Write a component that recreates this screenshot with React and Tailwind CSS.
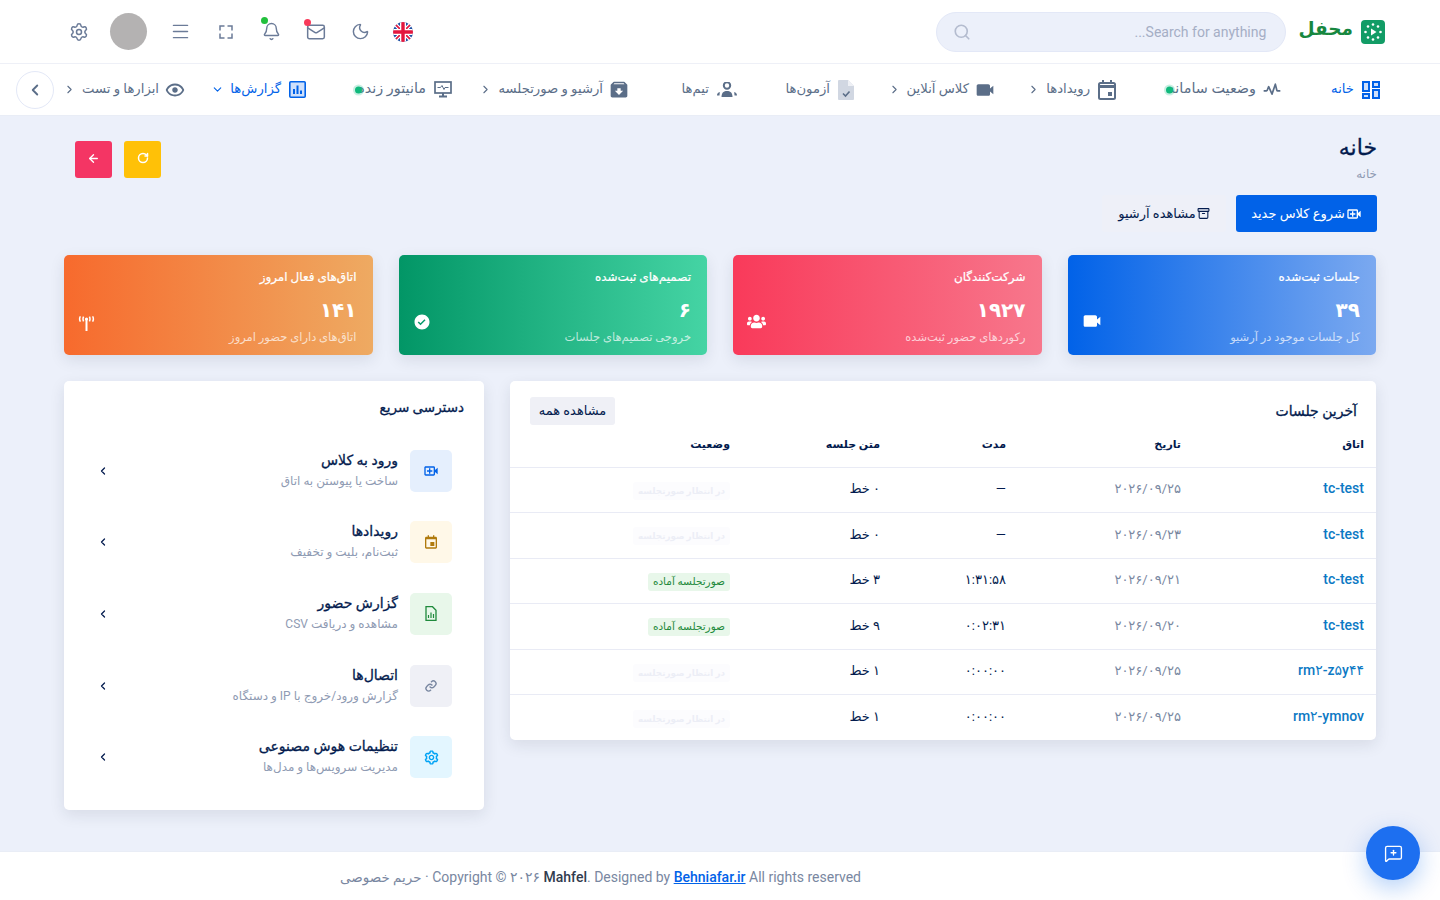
import { Settings, Menu, Bell, Mail, Moon, Search, ChevronLeft, ChevronRight, ChevronDown, ArrowLeft, RotateCw, MessageSquarePlus, Archive } from "lucide-react";
import { FaUsers } from "react-icons/fa";
import { BiSolidVideo, BiVideoPlus, BiCalendarEvent, BiLink, BiCog, BiPulse, BiSolidArchiveIn, BiShow, BiFullscreen, BiSolidCheckCircle } from "react-icons/bi";

const NAVY = "text-[#031b4e]";

const UkFlag = () => (
  <svg width="20" height="20" viewBox="0 0 20 20">
    <defs>
      <clipPath id="flagClip"><circle cx="10" cy="10" r="10" /></clipPath>
    </defs>
    <g clipPath="url(#flagClip)">
      <rect width="20" height="20" fill="#1e4fa3" />
      <path d="M0 0 L20 20 M20 0 L0 20" stroke="#fff" strokeWidth="4" />
      <path d="M0 0 L20 20 M20 0 L0 20" stroke="#e3173e" strokeWidth="1.6" />
      <path d="M10 0 V20 M0 10 H20" stroke="#fff" strokeWidth="6" />
      <path d="M10 0 V20 M0 10 H20" stroke="#e3173e" strokeWidth="3.4" />
    </g>
  </svg>
);

const Logo = () => (
  <svg width="24" height="24" viewBox="0 0 24 24">
    <rect width="24" height="24" rx="4" fill="#129c66" />
    <path d="M10 8.5 L15.5 12 L10 15.5 Z" fill="#fff" />
    {[[12, 4.5], [17, 6.5], [19.5, 12], [17, 17.5], [12, 19.5], [7, 17.5], [4.5, 12], [7, 6.5]].map(([x, y], i) => (
      <circle key={i} cx={x} cy={y} r="1.3" fill="#fff" />
    ))}
  </svg>
);

// --- nav icons, duotone ones drawn by hand ---
const DashIcon = () => (
  <svg width="18" height="18" viewBox="0 0 18 18" fill="#cfe0fb" stroke="#0162e8" strokeWidth="2">
    <rect x="1" y="1" width="6" height="9" />
    <rect x="11" y="1" width="6" height="5" />
    <rect x="1" y="13" width="6" height="4" />
    <rect x="11" y="9" width="6" height="8" />
  </svg>
);

const CalendarIcon = () => (
  <svg width="18" height="20" viewBox="0 0 18 20" fill="none" stroke="#5b6e88" strokeWidth="2">
    <rect x="1" y="3" width="16" height="16" rx="1.5" />
    <path d="M1 6.5 H17" strokeWidth="3" />
    <path d="M5 0 V3 M13 0 V3" />
    <rect x="10" y="12" width="4" height="4" fill="#5b6e88" stroke="none" />
  </svg>
);

const FileCheckIcon = () => (
  <svg width="16" height="20" viewBox="0 0 16 20">
    <path d="M1 0 H10 L16 6 V19 a1 1 0 0 1 -1 1 H1 a1 1 0 0 1 -1 -1 V1 a1 1 0 0 1 1 -1 Z" fill="#d1d7e2" />
    <path d="M10 0 L16 6 H10 Z" fill="#eef0f5" />
    <path d="M5 13.5 L7.5 16 L11.5 11.5" fill="none" stroke="#5b6e88" strokeWidth="1.6" />
  </svg>
);

const TeamIcon = () => (
  <svg width="20" height="16" viewBox="0 0 20 16" fill="#5b6e88">
    <circle cx="10" cy="3.5" r="3.2" fill="none" stroke="#5b6e88" strokeWidth="2" />
    <path d="M4.5 15 c0 -4.5 2.5 -6 5.5 -6 s5.5 1.5 5.5 6 Z" />
    <path d="M0 13.5 c0 -2 1 -3 2.8 -3.5 L2.5 13.5 Z M20 13.5 c0 -2 -1 -3 -2.8 -3.5 L17.5 13.5 Z" />
  </svg>
);

const MonitorIcon = () => (
  <svg width="18" height="17" viewBox="0 0 18 17" fill="none" stroke="#5b6e88" strokeWidth="1.7">
    <rect x="1" y="1" width="16" height="11" />
    <path d="M3.5 6.5 H6.5 L8 4.5 L10 8.5 L11 6.5 H14.5" strokeWidth="1" />
    <path d="M9 12 V15 M5 15.5 H13" strokeWidth="2" />
  </svg>
);

const ChartBoxIcon = () => (
  <svg width="17" height="17" viewBox="0 0 17 17">
    <rect x="0.8" y="0.8" width="15.4" height="15.4" rx="1" fill="#cfe0fb" stroke="#0162e8" strokeWidth="1.6" />
    <path d="M5 13 V8 M8.5 13 V4.5 M12 13 V9.5" stroke="#0162e8" strokeWidth="2" />
  </svg>
);

const AntennaIcon = () => (
  <svg width="17" height="15" viewBox="0 0 17 15" fill="none" stroke="currentColor" strokeWidth="1.5">
    <path d="M8.5 3 V15" strokeWidth="2" />
    <circle cx="8.5" cy="3" r="1.6" fill="currentColor" stroke="none" />
    <path d="M5.6 .6 Q4.4 3 5.6 5.4 M11.4 .6 Q12.6 3 11.4 5.4 M2.4 .4 Q.8 3 2.4 5.6 M14.6 .4 Q16.2 3 14.6 5.6" />
  </svg>
);

const LiveDot = () => (
  <span className="absolute left-[-4px] top-1/2 -translate-y-1/2 w-[11px] h-[11px] rounded-full bg-[#22c08a]/25 flex items-center justify-center">
    <span className="w-[7px] h-[7px] rounded-full bg-[#10b97c]" />
  </span>
);

const navItems = [
  { label: "خانه", icon: <DashIcon />, width: "w-[98px]", active: true },
  { label: "وضعیت سامانه", icon: <BiPulse size={20} className="-ml-[2px]" />, width: "w-[166px]", live: true },
  { label: "رویدادها", icon: <CalendarIcon />, width: "w-[121px]", arrow: "right" },
  { label: "کلاس آنلاین", icon: <BiSolidVideo size={20} className="-ml-[2px]" />, width: "w-[141px]", arrow: "right" },
  { label: "آزمون‌ها", icon: <FileCheckIcon />, width: "w-[117px]" },
  { label: "تیم‌ها", icon: <TeamIcon />, width: "w-[108px]" },
  { label: "آرشیو و صورتجلسه", icon: <BiSolidArchiveIn size={20} className="-ml-[2px]" />, width: "w-[177px]", arrow: "right" },
  { label: "مانیتور زنده", icon: <MonitorIcon />, width: "w-[146px]", live: true },
  { label: "گزارش‌ها", icon: <ChartBoxIcon />, width: "w-[120px]", arrow: "down", active: true },
  { label: "ابزارها و تست", icon: <BiShow size={22} className="-ml-[3px]" />, width: "w-[122px]", arrow: "right" },
];

const stats = [
  { title: "جلسات ثبت‌شده", value: "۳۹", sub: "کل جلسات موجود در آرشیو", gradient: "bg-[linear-gradient(to_right,#0162e8,#7ba9f0)]", icon: <BiSolidVideo size={20} /> },
  { title: "شرکت‌کنندگان", value: "۱۹۲۷", sub: "رکوردهای حضور ثبت‌شده", gradient: "bg-[linear-gradient(to_right,#f93a5a,#f7778c)]", icon: <FaUsers size={19} /> },
  { title: "تصمیم‌های ثبت‌شده", value: "۶", sub: "خروجی تصمیم‌های جلسات", gradient: "bg-[linear-gradient(to_right,#029666,#45d4a4)]", icon: <BiSolidCheckCircle size={18} /> },
  { title: "اتاق‌های فعال امروز", value: "۱۴۱", sub: "اتاق‌های دارای حضور امروز", gradient: "bg-[linear-gradient(to_right,#f76a2d,#eeaa62)]", icon: <AntennaIcon /> },
];

const sessions = [
  { room: "tc-test", date: "۲۰۲۶/۰۹/۲۵", duration: "—", lines: "۰ خط", ready: false },
  { room: "tc-test", date: "۲۰۲۶/۰۹/۲۳", duration: "—", lines: "۰ خط", ready: false },
  { room: "tc-test", date: "۲۰۲۶/۰۹/۲۱", duration: "۱:۳۱:۵۸", lines: "۳ خط", ready: true },
  { room: "tc-test", date: "۲۰۲۶/۰۹/۲۰", duration: "۰:۰۲:۳۱", lines: "۹ خط", ready: true },
  { room: "rm۲-z۵y۴۴", date: "۲۰۲۶/۰۹/۲۵", duration: "۰:۰۰:۰۰", lines: "۱ خط", ready: false },
  { room: "rm۲-ymnov", date: "۲۰۲۶/۰۹/۲۵", duration: "۰:۰۰:۰۰", lines: "۱ خط", ready: false },
];

function ChartFileIcon() {
  return (
    <svg width="12" height="15" viewBox="0 0 12 15" fill="none" stroke="currentColor" strokeWidth="1.3">
      <path d="M1 .7 H7.5 L11 4.2 V14.3 H1 Z" />
      <path d="M3.5 12 V9 M6 12 V6.5 M8.5 12 V8" strokeWidth="1.2" />
    </svg>
  );
}

const quickLinks = [
  { title: "ورود به کلاس", sub: "ساخت یا پیوستن به اتاق", box: "bg-[#e5effd] text-[#0162e8]", icon: <BiVideoPlus size={16} /> },
  { title: "رویدادها", sub: "ثبت‌نام، بلیت و تخفیف", box: "bg-[#fff8e8] text-[#b07a0c]", icon: <BiCalendarEvent size={16} /> },
  { title: "گزارش حضور", sub: "مشاهده و دریافت CSV", box: "bg-[#e8f7ea] text-[#1f8a3c]", icon: <ChartFileIcon /> },
  { title: "اتصال‌ها", sub: "گزارش ورود/خروج با IP و دستگاه", box: "bg-[#eff0f6] text-[#7987a1]", icon: <BiLink size={16} /> },
  { title: "تنظیمات هوش مصنوعی", sub: "مدیریت سرویس‌ها و مدل‌ها", box: "bg-[#e3f6ff] text-[#00a3f5]", icon: <BiCog size={17} /> },
];

const App = () => {
  return (
    <div dir="rtl" className="w-full h-[900px] overflow-hidden flex flex-col bg-[#ecf0fa] [font-family:Roboto,'DejaVu_Sans',sans-serif] text-[#031b4e]">

      {/* top header */}
      <header className="h-16 shrink-0 bg-white border-b border-[#eef0f7] flex items-center justify-between pr-[55px] pl-[69px]">
        <div className="flex items-center">
          <Logo />
          <span className="mr-[8px] text-[18.5px] font-bold leading-none text-[#17873f] pb-1">محفل</span>
          <div className="mr-[12px] w-[350px] h-[40px] rounded-full bg-[#ecf0fa] border border-[#e3e8f7] flex items-center justify-between pr-[19px] pl-[16px] text-[#a5aec5]">
            <span className="text-sm">Search for anything...</span>
            <Search size={18} strokeWidth={2.2} className="text-[#b4bccf]" />
          </div>
        </div>
        <div className="flex items-center text-[#6b7b98]">
          <UkFlag />
          <Moon size={19} className="mr-[23px]" strokeWidth={1.8} />
          <span className="relative mr-[25px]">
            <Mail size={20} strokeWidth={1.8} />
            <span className="absolute -top-[3px] right-[15px] w-[7px] h-[7px] rounded-full bg-[#f93a5a]" />
          </span>
          <span className="relative mr-[25px]">
            <Bell size={19} strokeWidth={1.8} />
            <span className="absolute -top-[5px] right-[13px] w-[7px] h-[7px] rounded-full bg-[#22c03c]" />
          </span>
          <BiFullscreen size={18} className="mr-[27px]" />
          <Menu size={21} className="mr-[26px]" strokeWidth={1.7} />
          <span className="mr-[23px] w-[37px] h-[37px] rounded-full bg-[#b4b2b2]" />
          <Settings size={20} className="mr-[21px]" strokeWidth={1.8} />
        </div>
      </header>

      {/* main nav */}
      <nav className="h-[52px] shrink-0 bg-white border-b border-[#e9edf6] flex items-center pr-[60px] pl-[16px]">
        {navItems.map((item) => (
          <div key={item.label} className={`${item.width} shrink-0 flex items-center`}>
            <div className={`relative flex items-center gap-2 leading-[18px] ${item.live ? "text-[14.4px]" : "text-[13.2px]"} ${item.active ? "text-[#0162e8]" : "text-[#5b6e88]"}`}>
              {item.icon}
              <span className="whitespace-nowrap -mt-[2px]">{item.label}</span>
              {item.live && <LiveDot />}
              {item.arrow === "right" && <ChevronRight size={13} className="-mr-[2px]" />}
              {item.arrow === "down" && <ChevronDown size={13} className="-mr-[2px]" />}
            </div>
          </div>
        ))}
        <button className="mr-auto w-[38px] h-[38px] rounded-full border border-[#e3e8f7] flex items-center justify-center text-[#5b6e88]">
          <ChevronLeft size={18} strokeWidth={2.5} />
        </button>
      </nav>

      {/* page body */}
      <main className="flex-1 px-[64px] flex flex-col">
        <div className="flex justify-between items-start pt-[24px] -mr-px">
          <div>
            <h1 className="text-[22px] leading-[16px] font-medium [-webkit-text-stroke:0.3px]">خانه</h1>
            <div className="mt-[11px] text-[12px] leading-[14px] text-[#8f9bb3]">خانه</div>
          </div>
          <div className="flex gap-[12px] ml-[11px] mt-[1px]">
            <button className="w-[37px] h-[37px] rounded-[3px] bg-[#ffc107] text-white flex items-center justify-center pb-[3px]">
              <RotateCw size={12} strokeWidth={3} />
            </button>
            <button className="w-[37px] h-[37px] rounded-[3px] bg-[#f43564] text-white flex items-center justify-center pb-[3px]">
              <ArrowLeft size={13} strokeWidth={2.5} />
            </button>
          </div>
        </div>

        <div className="flex gap-[10px] mt-[14px] -mr-px">
          <button className="w-[141px] h-[37px] rounded-[3px] bg-[#0162e8] text-white text-[13px] flex items-center justify-center gap-[1px]">
            <BiVideoPlus size={16} />
            شروع کلاس جدید
          </button>
          <button className="w-[124px] h-[37px] rounded-[3px] bg-[#eef0f8] text-[13px] flex items-center justify-center gap-[1px]">
            <Archive size={13} />
            مشاهده آرشیو
          </button>
        </div>

        {/* stat cards */}
        <div className="grid grid-cols-4 gap-[26px] mt-[23px]">
          {stats.map((s) => (
            <div key={s.title} className={`h-[100px] rounded-[5px] ${s.gradient} text-white pt-[13px] pr-[16px] pb-[9px] pl-[14px] shadow-[0_5px_15px_rgba(28,39,60,0.1)]`}>
              <div className="text-[12px] leading-[18px] font-medium [-webkit-text-stroke:0.2px]">{s.title}</div>
              <div className="flex items-end justify-between mt-[10px]">
                <div>
                  <div className="text-[20px] leading-[28px] font-bold">{s.value}</div>
                  <div className="text-[11.5px] leading-[18px] mt-[4px] text-white/70">{s.sub}</div>
                </div>
                <div className="mb-[15px]">{s.icon}</div>
              </div>
            </div>
          ))}
        </div>

        {/* lower section */}
        <div className="flex items-start justify-between mt-[26px]">
          <section className="w-[866px] rounded-[5px] bg-white shadow-[0_5px_15px_rgba(28,39,60,0.1)] overflow-hidden">
            <div className="flex items-center justify-between pt-[16px] pr-[19px] pl-[20px]">
              <h2 className="text-[14px] font-medium [-webkit-text-stroke:0.3px]">آخرین جلسات</h2>
              <button className="h-[28px] w-[85px] rounded-[3px] bg-[#eff0f6] text-[13px]">مشاهده همه</button>
            </div>
            <table className="w-full table-fixed border-collapse">
              <colgroup>
                <col className="w-[183px]" />
                <col className="w-[175px]" />
                <col className="w-[126px]" />
                <col className="w-[150px]" />
                <col className="w-[232px]" />
              </colgroup>
              <thead>
                <tr className="h-[42px] border-b border-[#e9ebf5] text-[11px] font-bold">
                  <th className="text-right px-[12px] pb-[2px]">اتاق</th>
                  <th className="text-right px-[12px] pb-[2px]">تاریخ</th>
                  <th className="text-right px-[12px] pb-[2px]">مدت</th>
                  <th className="text-right px-[12px] pb-[2px]">متن جلسه</th>
                  <th className="text-right px-[12px] pb-[2px]">وضعیت</th>
                </tr>
              </thead>
              <tbody>
                {sessions.map((row, i) => (
                  <tr key={i} className="h-[45.5px] border-b border-[#e9ebf5] last:border-b-0 text-[13px]">
                    <td className="px-[12px] pb-[2px] text-[14px] font-medium text-[#0c79c4]">{row.room}</td>
                    <td className="px-[12px] pb-[2px] text-[#7987a1]">{row.date}</td>
                    <td className="px-[12px] pb-[2px]">{row.duration}</td>
                    <td className="px-[12px] pb-[2px]">{row.lines}</td>
                    <td className="px-[12px]">
                      {row.ready ? (
                        <span className="inline-block h-[18px] leading-[18px] px-[5px] rounded-[3px] bg-[#e8f7ea] text-[#1f8a3c] text-[10.5px]">صورتجلسه آماده</span>
                      ) : (
                        <span className="inline-block h-[18px] leading-[18px] px-[5px] rounded-[3px] bg-[#fcfcfe] text-[#eceef6] text-[8.75px] font-bold">در انتظار صورتجلسه</span>
                      )}
                    </td>
                  </tr>
                ))}
              </tbody>
            </table>
          </section>

          <section className="w-[420px] rounded-[5px] bg-white shadow-[0_5px_15px_rgba(28,39,60,0.1)] pt-[16px] pr-[20px] pl-[20px] pb-[17px]">
            <h2 className="text-[13.5px] leading-[20px] font-medium [-webkit-text-stroke:0.3px]">دسترسی سریع</h2>
            <div className="mt-[18px] pr-[12px] pl-[12px]">
              {quickLinks.map((q) => (
                <div key={q.title} className="h-[71.6px] flex items-center">
                  <span className={`w-[42px] h-[42px] rounded-[5px] shrink-0 flex items-center justify-center ${q.box}`}>{q.icon}</span>
                  <div className="mr-[12px] -mt-[2px]">
                    <div className="text-[14px] leading-[20px] font-medium [-webkit-text-stroke:0.3px] mb-[2px]">{q.title}</div>
                    <div className="text-[12px] leading-[18px] text-[#8f9bb3]">{q.sub}</div>
                  </div>
                  <ChevronLeft size={12} strokeWidth={2.5} className={`mr-auto ml-[1px] ${NAVY}`} />
                </div>
              ))}
            </div>
          </section>
        </div>
      </main>

      <footer dir="ltr" className="h-[49px] shrink-0 bg-white border-t border-[#e9edf6] flex items-center pl-[340px] pt-[2px] text-[14px] text-[#7987a1]">
        <span className="text-[13.5px]">حریم خصوصی</span>
        <span className="whitespace-pre"> · Copyright © ۲۰۲۶ </span>
        <span className="font-medium text-[#323b4e]">Mahfel</span>
        <span className="whitespace-pre">. Designed by </span>
        <a href="#" className="text-[#0162e8] font-medium underline">Behniafar.ir</a>
        <span className="whitespace-pre"> All rights reserved</span>
      </footer>

      {/* chat button */}
      <button className="fixed right-[20px] bottom-[20px] w-[54px] h-[54px] rounded-full bg-[#1d6ff0] text-white flex items-center justify-center shadow-[0_8px_24px_rgba(1,98,232,0.3)]">
        <MessageSquarePlus size={19} strokeWidth={1.7} />
      </button>
    </div>
  );
};

export default App;
